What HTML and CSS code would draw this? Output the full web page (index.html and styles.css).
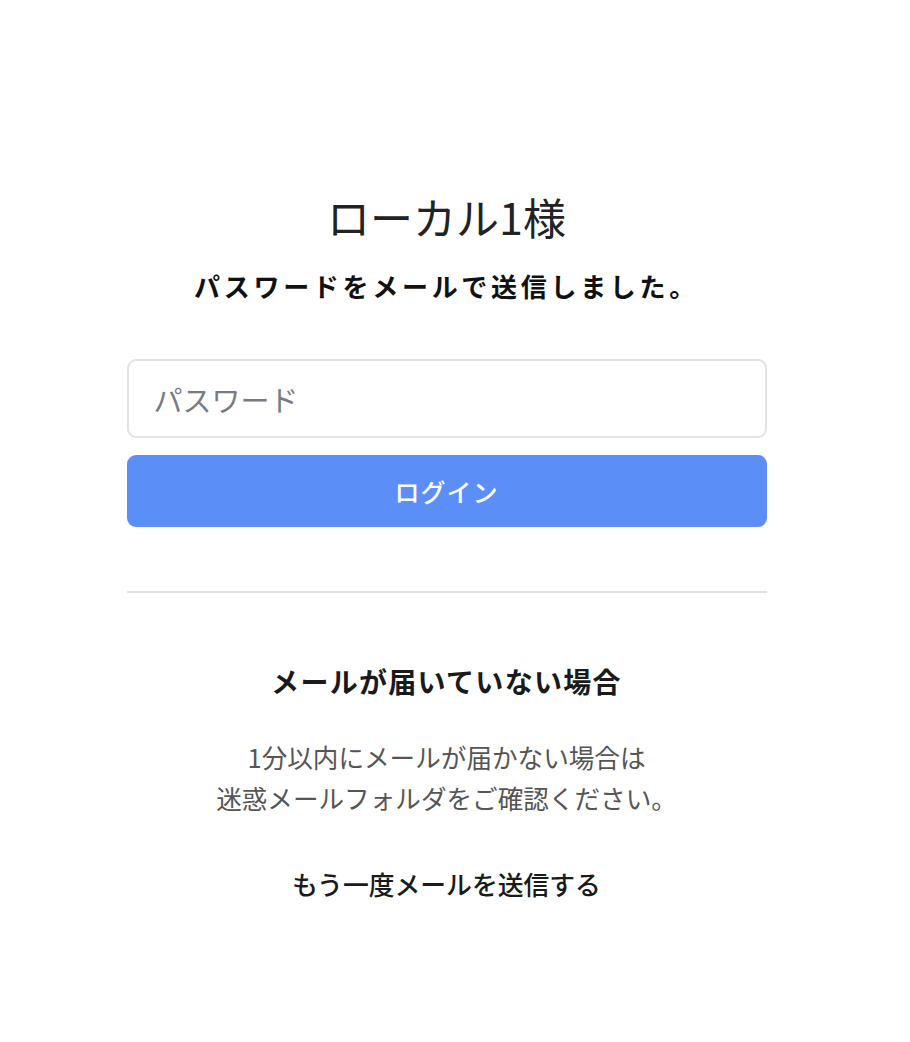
FILE: index.html
```html
<!DOCTYPE html>
<html lang="ja">
<head>
<meta charset="utf-8">
<title>ログイン</title>
<link rel="stylesheet" href="styles.css">
</head>
<body>
<main class="page">
  <section class="card">
    <h1 class="title">ローカル1様</h1>
    <p class="lead">パスワードをメールで送信しました。</p>
    <form class="form">
      <input class="field" type="password" placeholder="パスワード">
      <button class="btn" type="button">ログイン</button>
    </form>
    <hr class="divider">
    <h2 class="sub">メールが届いていない場合</h2>
    <p class="note">1分以内にメールが届かない場合は<br>迷惑メールフォルダをご確認ください。</p>
    <a class="resend" href="#">もう一度メールを送信する</a>
  </section>
</main>
</body>
</html>
```
FILE: styles.css
```css
* { box-sizing: border-box; }
html, body { margin: 0; padding: 0; background: #fff; }
body {
  font-family: "Noto Sans CJK JP", "Noto Sans", sans-serif;
  color: #1a1a1a;
}
.page {
  width: 893px;
  display: flex;
  justify-content: center;
  padding-top: 186px;
}
.card {
  width: 640px;
  display: flex;
  flex-direction: column;
  align-items: center;
}
.title {
  margin: 0;
  font-size: 43px;
  font-weight: 400;
  line-height: 60px;
  color: #222;
}
.lead {
  margin: 22px 0 0;
  font-size: 26px;
  font-weight: 700;
  letter-spacing: 3.7px;
  line-height: 36px;
  color: #111;
}
.form {
  width: 100%;
  margin-top: 55px;
  display: flex;
  flex-direction: column;
  gap: 17px;
}
.field {
  width: 100%;
  height: 79px;
  border: 2px solid #e3e3e3;
  border-radius: 9px;
  padding: 0 25px;
  font-family: inherit;
  font-size: 29px;
  color: #222;
  outline: none;
}
.field::placeholder { color: #7a7a80; }
.btn {
  width: 100%;
  height: 72px;
  border: 0;
  border-radius: 9px;
  background: #5b8ff7;
  color: #fff;
  font-family: inherit;
  font-size: 25px;
  font-weight: 500;
  letter-spacing: 1px;
}
.divider {
  width: 100%;
  margin: 64px 0 0;
  border: 0;
  border-top: 2px solid #e3e3e3;
}
.sub {
  margin: 68px 0 0;
  font-size: 28px;
  font-weight: 700;
  line-height: 40px;
  letter-spacing: 1.3px;
  color: #1a1a1a;
}
.note {
  margin: 35px 0 0;
  font-size: 25.6px;
  font-weight: 400;
  line-height: 41px;
  text-align: center;
  color: #555;
}
.resend {
  margin-top: 48px;
  font-size: 25.8px;
  font-weight: 500;
  line-height: 36px;
  color: #1a1a1a;
  text-decoration: none;
}
```
